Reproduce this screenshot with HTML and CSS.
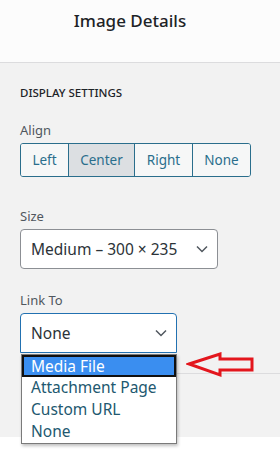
FILE: index.html
```html
<!DOCTYPE html>
<html lang="en">
<head>
    <meta charset="UTF-8">
    <meta name="viewport" content="width=device-width, initial-scale=1.0">
    <title>Image Details</title>
    <link rel="stylesheet" href="styles.css">
</head>
<body>
    <header class="modal-header">
        <h1>Image Details</h1>
    </header>

    <main class="panel">
        <h2 class="section-title">Display Settings</h2>

        <div class="field">
            <span class="field-label">Align</span>
            <div class="button-group">
                <button class="seg seg-left">Left</button>
                <button class="seg seg-center is-active">Center</button>
                <button class="seg seg-right">Right</button>
                <button class="seg seg-none">None</button>
            </div>
        </div>

        <div class="field size-field">
            <span class="field-label">Size</span>
            <div class="select size-select">
                <span>Medium – 300 × 235</span>
                <svg class="chevron" width="12" height="8" viewBox="0 0 12 8"><path d="M1 1.5 L6 6.5 L11 1.5" fill="none" stroke="#50575e" stroke-width="1.5"/></svg>
            </div>
        </div>

        <div class="field link-field">
            <span class="field-label">Link To</span>
            <div class="select-wrap">
                <div class="select link-select">
                    <span>None</span>
                    <svg class="chevron" width="12" height="8" viewBox="0 0 12 8"><path d="M1 1.5 L6 6.5 L11 1.5" fill="none" stroke="#50575e" stroke-width="1.5"/></svg>
                </div>
                <ul class="options">
                    <li class="option is-highlighted">Media File</li>
                    <li class="option">Attachment Page</li>
                    <li class="option">Custom URL</li>
                    <li class="option">None</li>
                </ul>
                <svg class="callout-arrow" width="70" height="26" viewBox="0 0 70 26">
                    <polygon points="3,12 34,2 34,7 66,7 66,18 34,18 34,23" fill="none" stroke="#e3161d" stroke-width="3" stroke-linejoin="miter"/>
                </svg>
            </div>
        </div>

        <div class="divider"></div>
    </main>

    <footer class="modal-footer"></footer>
</body>
</html>
```

FILE: styles.css
```css
body {
    margin: 0;
    font-family: 'Noto Sans', 'Open Sans', sans-serif;
    color: #1d2327;
    background: #f2f2f2;
}

.modal-header {
    height: 62px;
    background: #fcfcfc;
    border-bottom: 1px solid #dcdcde;
    box-sizing: content-box;
    padding-right: 20px;
}

.modal-header h1 {
    margin: 0;
    padding-top: 8px;
    font-size: 17px;
    font-weight: 500;
    line-height: 26px;
    text-align: center;
}

.panel {
    padding: 22px 20px 0 20px;
    height: 352px;
    position: relative;
}

.section-title {
    margin: 0;
    font-size: 11.5px;
    font-weight: 500;
    text-transform: uppercase;
    line-height: 16px;
}

.field {
    margin-top: 20px;
    display: flex;
    flex-direction: column;
    gap: 4px;
}

.size-field {
    margin-top: 30px;
}

.link-field {
    margin-top: 22px;
}

.field-label {
    font-size: 13px;
    line-height: 18px;
    color: #50575e;
}

.button-group {
    display: flex;
    width: 231px;
    height: 34px;
    box-sizing: border-box;
    border: 1px solid #2a6e8c;
    border-radius: 3px;
    overflow: hidden;
}

.seg {
    font-family: inherit;
    font-size: 13.5px;
    color: #2a6e8c;
    background: #f6f7f7;
    border: none;
    border-left: 1px solid #2a6e8c;
    padding: 0;
    margin: 0;
}

.seg-left { width: 47px; border-left: none; }
.seg-center { width: 66px; }
.seg-right { width: 58px; }
.seg-none { flex: 1; }

.seg.is-active {
    background: #dcdfe2;
}

.select {
    display: flex;
    align-items: center;
    justify-content: space-between;
    height: 40px;
    box-sizing: border-box;
    padding: 0 9px 0 10px;
    background: #fff;
    border: 1px solid #8c8f94;
    border-radius: 4px;
    font-size: 15.5px;
    color: #2c3338;
}

.size-select {
    width: 198px;
}

.select-wrap {
    position: relative;
    width: 157px;
}

.link-select {
    border: 1.5px solid #2271b1;
    border-radius: 4px 4px 0 0;
}

.options {
    position: absolute;
    top: 41px;
    left: 1px;
    width: 156px;
    margin: 0;
    padding: 0;
    list-style: none;
    background: #fff;
    border: 1px solid #7a7a7a;
    box-sizing: border-box;
    box-shadow: 1px 2px 3px rgba(0, 0, 0, 0.25);
    z-index: 2;
}

.option {
    height: 22px;
    line-height: 21px;
    padding-left: 9px;
    font-size: 15.5px;
    color: #22586f;
    box-sizing: border-box;
}

.option.is-highlighted {
    background: #3a8ef0;
    color: #fff;
    border: 2px solid #101010;
    padding-left: 7px;
    line-height: 18px;
}

.callout-arrow {
    position: absolute;
    top: 39px;
    left: 166px;
}

.divider {
    margin: 20px -20px 0 136px;
    border-top: 1px solid #dcdcde;
}

.modal-footer {
    height: 13px;
    background: #fff;
}
```
